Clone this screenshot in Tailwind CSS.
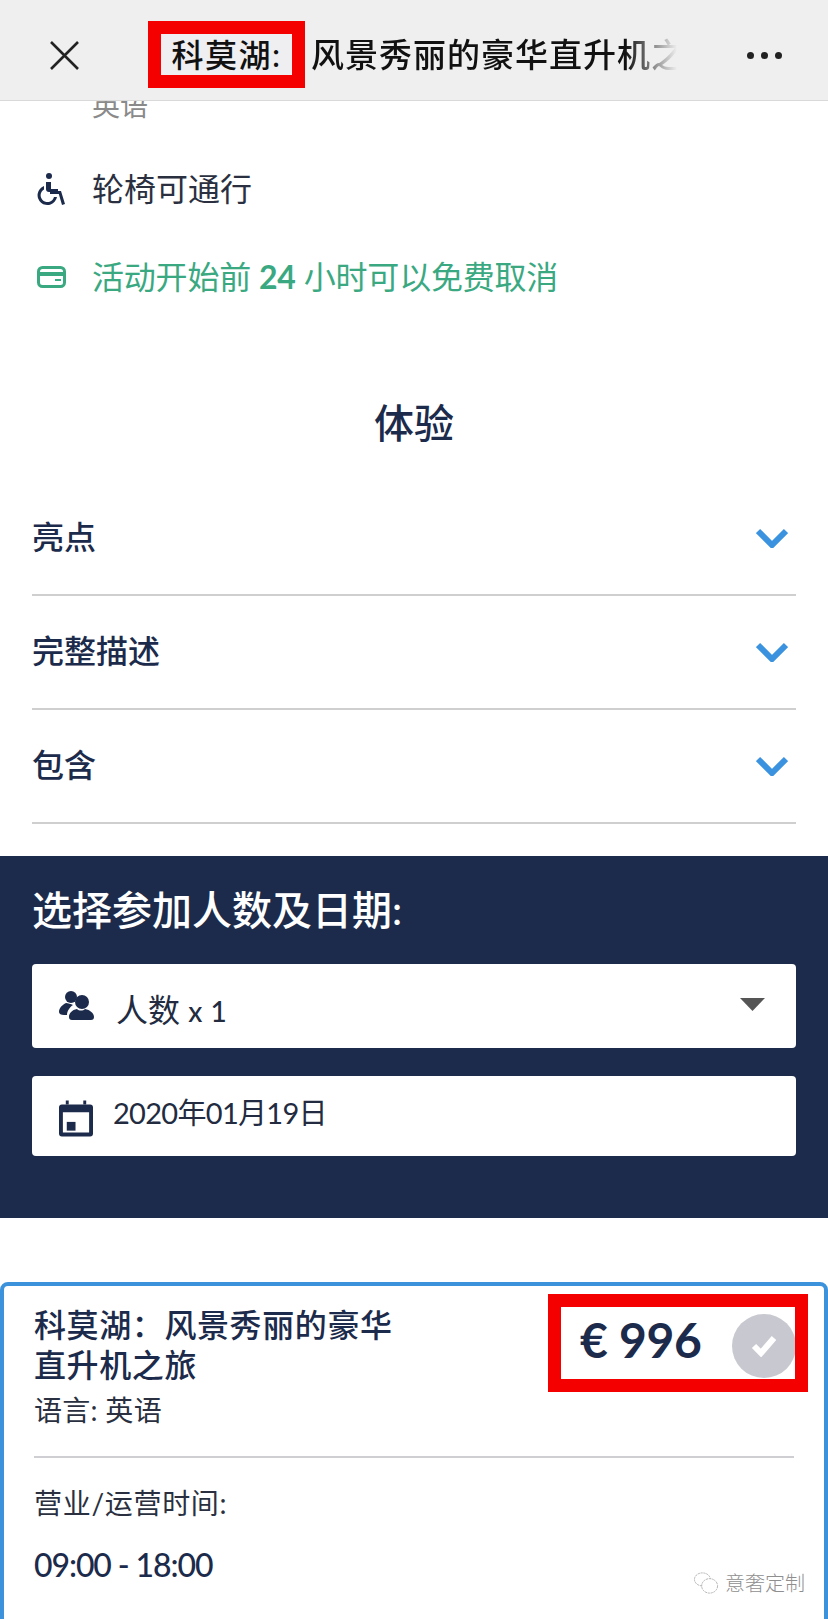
<!DOCTYPE html>
<html lang="zh-CN">
<head>
    <meta charset="UTF-8">
    <meta name="viewport" content="width=device-width, initial-scale=1.0">
    <title>科莫湖</title>
    <script src="https://cdn.jsdelivr.net/npm/@tailwindcss/browser@4"></script>
</head>
<body class="bg-white h-[1619px] overflow-hidden font-['Lato','Noto_Sans_CJK_SC',sans-serif] text-[#1c2b4b]">
    <!-- top bar -->
    <header class="relative z-10 h-[101px] bg-[#efefef] border-b border-[#d9d9d9] flex items-center pl-[49px] pt-[10px] text-[#111]">
        <svg class="w-[31px] h-[29px] shrink-0" viewBox="0 0 31 29" fill="none" stroke="#222" stroke-width="2.6"><path d="M2 1l27 27M29 1L2 28"/></svg>
        <div class="ml-[68px] w-[157px] h-[67px] -mt-[1px] border-[13px] border-[#f40000] bg-[#efeff1] flex items-center justify-center text-[32px] font-medium tracking-[1.5px] whitespace-nowrap shrink-0">科莫湖:</div>
        <div class="ml-[6px] w-[366px] overflow-hidden whitespace-nowrap text-[33px] font-medium tracking-[1px] [mask-image:linear-gradient(to_right,black_86%,transparent)]">风景秀丽的豪华直升机之旅</div>
        <div class="ml-[70px] flex gap-[7px]">
            <span class="w-[7px] h-[7px] rounded-full bg-[#222]"></span>
            <span class="w-[7px] h-[7px] rounded-full bg-[#222]"></span>
            <span class="w-[7px] h-[7px] rounded-full bg-[#222]"></span>
        </div>
    </header>

    <main>
        <div class="h-[44px] pl-[92px] overflow-hidden">
            <p class="-mt-[10px] text-[28px] leading-[28px] text-[#8a8a8a]">英语</p>
        </div>

        <div class="h-[88px] flex items-center pl-[36px] gap-[27px] text-[32px] text-[#2a3040]">
            <svg class="w-[30px] h-[33px]" viewBox="0 0 30 33" fill="#1c2b4b">
                <circle cx="13" cy="3" r="3"/>
                <path d="M10 9h5v7h7v3h-9a3 3 0 0 1-3-3z"/>
                <path d="M8 13v3.400a6.800 6.800 0 1 0 10 7.600h3a9.800 9.800 0 1 1-13-11z"/>
                <path d="M14 18h11l4 13-3 1-3.200-11H14z"/>
            </svg>
            <span class="-ml-[1px]">轮椅可通行</span>
        </div>
        <div class="h-[88px] flex items-center pl-[37px] gap-[26px] text-[32px] text-[#3aa981]">
            <svg class="w-[29px] h-[22px]" viewBox="0 0 29 22" fill="none" stroke="#3aa981" stroke-width="3"><rect x="1.500" y="1.500" width="26" height="19" rx="4"/><path d="M2 8h25" stroke-width="4"/><path d="M18 14h6" stroke-width="2"/></svg>
            <span class="tracking-[-0.2px]">活动开始前 <b class="font-bold">24</b> 小时可以免费取消</span>
        </div>

        <h2 class="pt-[78px] pb-[35px] text-center text-[40px] leading-[48px] font-medium">体验</h2>

        <ul class="mx-[32px]">
            <li class="h-[114px] border-b-2 border-[#cfcfcf] flex items-center justify-between text-[32px] font-medium">
                <span class="-mt-[2px]">亮点</span>
                <svg class="w-[32px] h-[20px] mr-[8px]" viewBox="0 0 32 20" fill="none" stroke="#3b93e0" stroke-width="6"><path d="M2 3l14 14L30 3"/></svg>
            </li>
            <li class="h-[114px] border-b-2 border-[#cfcfcf] flex items-center justify-between text-[32px] font-medium">
                <span class="-mt-[2px]">完整描述</span>
                <svg class="w-[32px] h-[20px] mr-[8px]" viewBox="0 0 32 20" fill="none" stroke="#3b93e0" stroke-width="6"><path d="M2 3l14 14L30 3"/></svg>
            </li>
            <li class="h-[114px] border-b-2 border-[#cfcfcf] flex items-center justify-between text-[32px] font-medium">
                <span class="-mt-[2px]">包含</span>
                <svg class="w-[32px] h-[20px] mr-[8px]" viewBox="0 0 32 20" fill="none" stroke="#3b93e0" stroke-width="6"><path d="M2 3l14 14L30 3"/></svg>
            </li>
        </ul>

        <!-- date and people picker -->
        <section class="mt-[32px] h-[362px] bg-[#1c2b4b] px-[32px] pt-[29px]">
            <h3 class="text-[40px] leading-[50px] font-medium text-white">选择参加人数及日期:</h3>
            <div class="mt-[29px] h-[84px] bg-white rounded-[4px] flex items-center pl-[27px] pr-[31px]">
                <svg class="w-[35px] h-[29px] shrink-0 -mt-[2px]" viewBox="0 0 35 29" fill="#1c2b4b">
                    <circle cx="12" cy="6" r="6"/>
                    <path d="M7 12c-4 2-7 5-7 9 0 2 2 3 5 3h3c0-4 3-8 6-10-2-1-5-2-7-2z"/>
                    <circle cx="23" cy="11" r="7"/>
                    <path d="M18 18c-5 1-8 4-8 8 0 2 1 3 3 3h19c2 0 3-1 3-3 0-4-4-7-9-8-2 2-6 2-8 0z"/>
                </svg>
                <span class="ml-[22px] mt-[9px] text-[32px] leading-[40px] text-[#222b3f]">人数 <span class="font-medium text-[28px] tracking-[0.5px]">x 1</span></span>
                <svg class="ml-auto w-[25px] h-[13px] -mt-[4px]" viewBox="0 0 25 13" fill="#555"><path d="M0 0h25L12.500 13z"/></svg>
            </div>
            <div class="mt-[28px] h-[80px] bg-white rounded-[4px] flex items-center pl-[27px]">
                <svg class="w-[34px] h-[37px] shrink-0 mt-[4px]" viewBox="0 0 35 37" fill="#1c2b4b">
                    <path d="M7 0h3v4H7zM25 0h3v4h-3z"/>
                    <path fill-rule="evenodd" d="M3 4h29a3 3 0 0 1 3 3v27a3 3 0 0 1-3 3H3a3 3 0 0 1-3-3V7a3 3 0 0 1 3-3zM4 12v21h27V12z"/>
                    <rect x="8" y="22" width="9" height="9"/>
                </svg>
                <span class="ml-[20px] -mt-[6px] text-[29px] text-[#222b3f] tracking-[-0.7px]">2020年01月19日</span>
            </div>
        </section>

        <!-- option card -->
        <article class="relative mt-[64px] h-[400px] border-[4px] border-[#3d92dc] rounded-[8px] pt-[19px] px-[30px]">
            <div class="w-[372px] text-[32px] leading-[40px] font-medium tracking-[0.6px]">科莫湖：风景秀丽的豪华直升机之旅</div>
            <p class="mt-[7px] text-[28px] leading-[36px] text-[#2a3040] tracking-[0.3px]">语言: 英语</p>
            <div class="mt-[28px] h-[2px] bg-[#cfcfd3]"></div>
            <p class="mt-[25px] text-[28px] leading-[40px] text-[#2a3040] tracking-[0.7px]">营业/运营时间:</p>
            <p class="mt-[22px] text-[32px] leading-[40px] font-medium tracking-[-1.1px]">09:00 - 18:00</p>

            <div class="absolute top-[8px] right-[16px] w-[260px] h-[98px] border-[13px] border-[#f40000] overflow-hidden">
                <span class="absolute left-[19px] top-[3px] text-[48px] leading-[60px] font-bold whitespace-nowrap tracking-[-0.3px]">€ 996</span>
                <span class="absolute left-[171px] top-[7px] w-[64px] h-[64px] rounded-full bg-[#c8c8d0] flex items-center justify-center">
                    <svg class="w-[26px] h-[22px]" viewBox="0 0 26 22" fill="none" stroke="#fff" stroke-width="6"><path d="M3 11l7 7L23 3"/></svg>
                </span>
            </div>

            <!-- watermark -->
            <div class="absolute left-[689px] top-[284px] flex items-center gap-[6px] text-[#8f8f8f]">
                <svg class="w-[26px] h-[26px]" viewBox="0 0 36 36" fill="none" stroke="#aaa" stroke-width="1.200" stroke-dasharray="3 1"><ellipse cx="13" cy="13" rx="11" ry="9"/><ellipse cx="23" cy="22" rx="11" ry="10" fill="#fff"/></svg>
                <span class="text-[20px] leading-[24px] font-light">意奢定制</span>
            </div>
        </article>
    </main>
</body>
</html>
